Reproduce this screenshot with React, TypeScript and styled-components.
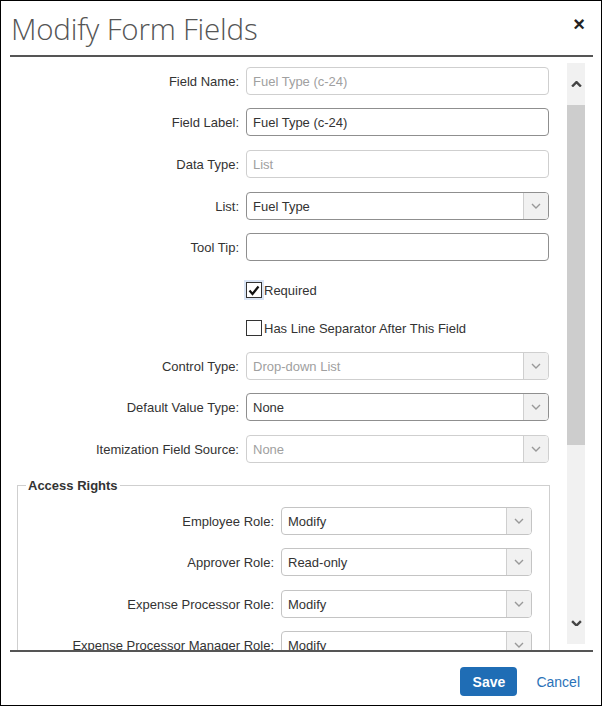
import styled, { createGlobalStyle } from 'styled-components';

const GlobalStyle = createGlobalStyle`
  html, body {
    margin: 0;
    padding: 0;
    background: #fff;
  }
  body {
    font-family: "Liberation Sans", Arial, sans-serif;
    font-size: 13px;
    color: #333;
  }
`;

const Dialog = styled.div`
  width: 602px;
  height: 706px;
  box-sizing: border-box;
  border: 1px solid #000;
  display: flex;
  flex-direction: column;
  background: #fff;
  overflow: hidden;
`;

const Header = styled.div`
  height: 54px;
  display: flex;
  align-items: center;
  justify-content: space-between;
  padding: 0 16px 0 10px;
`;

const Title = styled.h1`
  margin: 0;
  font-family: "Open Sans", "Liberation Sans", sans-serif;
  font-weight: 300;
  font-size: 29.5px;
  color: #555;
  letter-spacing: -0.2px;
`;

const Close = styled.button`
  border: none;
  background: none;
  padding: 0;
  font-family: "Liberation Sans", Arial, sans-serif;
  font-size: 20px;
  font-weight: bold;
  color: #222;
  cursor: pointer;
  margin-top: -8px;
`;

const Rule = styled.div`
  height: 2px;
  background: #555;
  margin: 0 8px 0 9px;
  flex: none;
`;

const Body = styled.div`
  flex: 1;
  min-height: 0;
  display: flex;
  overflow: hidden;
`;

const Content = styled.div`
  width: 565px;
  flex: none;
  overflow: hidden;
`;

const Row = styled.div<{ $mt: number; $label: number; $field: number }>`
  display: grid;
  grid-template-columns: ${(p) => p.$label}px ${(p) => p.$field}px;
  column-gap: 7px;
  align-items: center;
  margin-top: ${(p) => p.$mt}px;
`;

const Label = styled.label`
  text-align: right;
  color: #333;
  white-space: nowrap;
`;

type Tone = 'muted' | 'plain' | 'dark';

const borderFor = (t: Tone) => (t === 'dark' ? '#8f8f8f' : t === 'plain' ? '#c4c4c4' : '#cfcfcf');

const TextBox = styled.input<{ $tone: Tone }>`
  box-sizing: border-box;
  height: 28px;
  width: 100%;
  padding: 0 6px;
  border: 1px solid ${(p) => borderFor(p.$tone)};
  border-radius: 4px;
  background: #fff;
  font-family: inherit;
  font-size: 13px;
  color: ${(p) => (p.$tone === 'muted' ? '#a0a0a0' : '#333')};
  outline: none;
`;

const SelectBox = styled.div<{ $tone: Tone }>`
  box-sizing: border-box;
  height: 28px;
  display: flex;
  align-items: stretch;
  border: 1px solid ${(p) => borderFor(p.$tone)};
  border-radius: 4px;
  background: #fff;
  overflow: hidden;
`;

const SelectValue = styled.span<{ $tone: Tone }>`
  flex: 1;
  display: flex;
  align-items: center;
  padding: 0 6px;
  color: ${(p) => (p.$tone === 'muted' ? '#a0a0a0' : '#333')};
`;

const DropButton = styled.span`
  width: 24px;
  flex: none;
  display: flex;
  align-items: center;
  justify-content: center;
  background: #f1f1f1;
  border-left: 1px solid #cfcfcf;
`;

const CheckLine = styled.label`
  display: flex;
  align-items: center;
  gap: 2px;
  color: #333;
  white-space: nowrap;
`;

const Box = styled.span<{ $focus?: boolean }>`
  box-sizing: border-box;
  width: 16px;
  height: 16px;
  border: 1px solid #333;
  background: #fff;
  display: inline-flex;
  align-items: center;
  justify-content: center;
  box-shadow: ${(p) => (p.$focus ? '0 0 0 2px rgba(150, 180, 225, 0.35)' : 'none')};
`;

const Fieldset = styled.fieldset`
  width: 533px;
  box-sizing: border-box;
  margin: 15px 0 0 16px;
  padding: 0 16px 20px 8px;
  border: 1px solid #cfcfcf;
  border-radius: 0;
`;

const Legend = styled.legend`
  padding: 0 2px;
  font-weight: bold;
  font-size: 13px;
  color: #333;
`;

const Scrollbar = styled.div`
  width: 18px;
  flex: none;
  margin: 6px 0 6px 1px;
  background: #f1f1f1;
  display: flex;
  flex-direction: column;
  align-items: center;
`;

const ScrollArrow = styled.div`
  height: 42px;
  width: 100%;
  display: flex;
  align-items: center;
  justify-content: center;
  flex: none;
`;

const Thumb = styled.div`
  width: 100%;
  height: 340px;
  background: #cdcdcd;
`;

const Spacer = styled.div`
  flex: 1;
`;

const Footer = styled.div`
  flex: none;
  height: 53px;
  box-sizing: border-box;
  padding: 6px 21px 0 0;
  display: flex;
  align-items: center;
  justify-content: flex-end;
  gap: 19px;
`;

const SaveButton = styled.button`
  height: 29px;
  width: 57px;
  border: none;
  border-radius: 4px;
  background: #1f6db5;
  color: #fff;
  font-family: "Liberation Sans", Arial, sans-serif;
  font-weight: bold;
  font-size: 14px;
  cursor: pointer;
`;

const CancelLink = styled.a`
  color: #2a72b8;
  font-size: 14px;
  text-decoration: none;
  cursor: pointer;
`;

function Chevron({ up, color = '#999', size = 10, weight = 1.4 }: { up?: boolean; color?: string; size?: number; weight?: number }) {
  return (
    <svg width={size} height={size * 0.6} viewBox="0 0 10 6">
      <path d={up ? 'M1 5 L5 1 L9 5' : 'M1 1 L5 5 L9 1'} fill="none" stroke={color} strokeWidth={weight} />
    </svg>
  );
}

function Select({ value, tone }: { value: string; tone: Tone }) {
  return (
    <SelectBox $tone={tone}>
      <SelectValue $tone={tone}>{value}</SelectValue>
      <DropButton>
        <Chevron />
      </DropButton>
    </SelectBox>
  );
}

const fields: { label: string; value: string; mt: number; tone: Tone }[] = [
  { label: 'Field Name:', value: 'Fuel Type (c-24)', mt: 10, tone: 'muted' },
  { label: 'Field Label:', value: 'Fuel Type (c-24)', mt: 13, tone: 'dark' },
  { label: 'Data Type:', value: 'List', mt: 14, tone: 'muted' },
];

const roles = [
  { label: 'Employee Role:', value: 'Modify', mt: 14 },
  { label: 'Approver Role:', value: 'Read-only', mt: 13 },
  { label: 'Expense Processor Role:', value: 'Modify', mt: 14 },
  { label: 'Expense Processor Manager Role:', value: 'Modify', mt: 13 },
];

export default function App() {
  return (
    <>
      <GlobalStyle />
      <Dialog>
        <Header>
          <Title>Modify Form Fields</Title>
          <Close aria-label="Close">×</Close>
        </Header>
        <Rule />
        <Body>
          <Content>
            {fields.map((f) => (
              <Row key={f.label} $mt={f.mt} $label={238} $field={303}>
                <Label>{f.label}</Label>
                <TextBox $tone={f.tone} defaultValue={f.value} readOnly />
              </Row>
            ))}
            <Row $mt={14} $label={238} $field={303}>
              <Label>List:</Label>
              <Select value="Fuel Type" tone="dark" />
            </Row>
            <Row $mt={13} $label={238} $field={303}>
              <Label>Tool Tip:</Label>
              <TextBox $tone="dark" defaultValue="" readOnly />
            </Row>
            <Row $mt={21} $label={238} $field={303}>
              <span />
              <CheckLine>
                <Box $focus>
                  <svg width="12" height="11" viewBox="0 0 12 11">
                    <path d="M1.5 5.5 L4.5 9 L10.5 1.5" fill="none" stroke="#111" strokeWidth="2.2" />
                  </svg>
                </Box>
                Required
              </CheckLine>
            </Row>
            <Row $mt={22} $label={238} $field={303}>
              <span />
              <CheckLine>
                <Box />
                Has Line Separator After This Field
              </CheckLine>
            </Row>
            <Row $mt={16} $label={238} $field={303}>
              <Label>Control Type:</Label>
              <Select value="Drop-down List" tone="muted" />
            </Row>
            <Row $mt={13} $label={238} $field={303}>
              <Label>Default Value Type:</Label>
              <Select value="None" tone="dark" />
            </Row>
            <Row $mt={14} $label={238} $field={303}>
              <Label>Itemization Field Source:</Label>
              <Select value="None" tone="muted" />
            </Row>
            <Fieldset>
              <Legend>Access Rights</Legend>
              {roles.map((r) => (
                <Row key={r.label} $mt={r.mt} $label={248} $field={251}>
                  <Label>{r.label}</Label>
                  <Select value={r.value} tone="plain" />
                </Row>
              ))}
            </Fieldset>
          </Content>
          <Scrollbar>
            <ScrollArrow>
              <Chevron up color="#444" size={11} weight={2.2} />
            </ScrollArrow>
            <Thumb />
            <Spacer />
            <ScrollArrow>
              <Chevron color="#444" size={11} weight={2.2} />
            </ScrollArrow>
          </Scrollbar>
        </Body>
        <Rule />
        <Footer>
          <SaveButton>Save</SaveButton>
          <CancelLink>Cancel</CancelLink>
        </Footer>
      </Dialog>
    </>
  );
}
